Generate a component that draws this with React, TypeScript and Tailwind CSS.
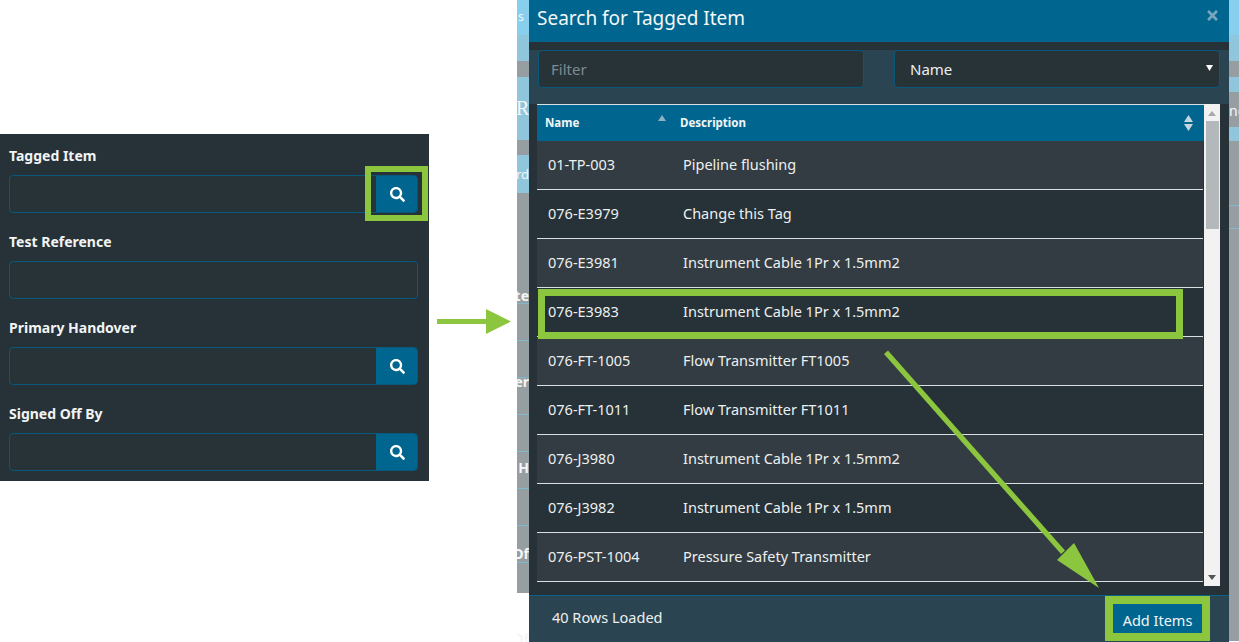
import { FaSearch, FaTimes } from "react-icons/fa";

const font = { fontFamily: '"Noto Sans", sans-serif' };

const rows = [
  ["01-TP-003", "Pipeline flushing"],
  ["076-E3979", "Change this Tag"],
  ["076-E3981", "Instrument Cable 1Pr x 1.5mm2"],
  ["076-E3983", "Instrument Cable 1Pr x 1.5mm2"],
  ["076-FT-1005", "Flow Transmitter FT1005"],
  ["076-FT-1011", "Flow Transmitter FT1011"],
  ["076-J3980", "Instrument Cable 1Pr x 1.5mm2"],
  ["076-J3982", "Instrument Cable 1Pr x 1.5mm"],
  ["076-PST-1004", "Pressure Safety Transmitter"],
];

function Field({ label, search }: { label: string; search: boolean }) {
  return (
    <div className="h-[86px] pt-[13px]">
      <div className="text-[14px] leading-[18px] font-bold text-[#f2f4f4] ml-[9px]">{label}</div>
      <div className="mt-[10px] ml-[9px] w-[409px] h-[38px] flex rounded-[4px] border border-[#07587a] bg-[#283338] overflow-hidden">
        <div className="flex-1" />
        {search && (
          <div className="w-[42px] -my-px -mr-px bg-[#00668f] flex items-center justify-center text-white">
            <FaSearch className="text-[15px]" />
          </div>
        )}
      </div>
    </div>
  );
}

function Strip({ bands, width }: { bands: [number, string][]; width: string }) {
  return (
    <div className={width + " h-full flex flex-col shrink-0"}>
      {bands.map(([h, c], i) => (
        <div key={i} style={{ height: h, background: c }} />
      ))}
    </div>
  );
}

const B = "#88cfee";
const D = "#8fc6dc";
const G = "#979ea2";
const L = "#7fb9d0";

const leftBands: [number, string][] = [
  [35, B], [26, D], [16, G], [63, D], [15, G], [38, D], [110, G], [1, L], [36, G], [1, L], [36, G], [1, L], [36, G], [1, L], [36, G], [1, L], [36, G], [1, L], [36, G], [1, L], [36, G], [1, L], [30, G],
];
const rightBands: [number, string][] = [
  [35, B], [26, D], [16, G], [15, D], [35, G], [14, D], [64, G], [1, L], [22, G], [1, L], [412, G],
];

export default function App() {
  return (
    <div className="relative flex w-[1239px] h-[642px] overflow-hidden bg-white" style={font}>
      {/* Left form panel */}
      <div className="w-[429px] h-[347px] mt-[134px] bg-[#263238] shrink-0">
        <Field label="Tagged Item" search />
        <Field label="Test Reference" search={false} />
        <Field label="Primary Handover" search />
        <Field label="Signed Off By" search />
      </div>

      <div className="w-[88px] shrink-0" />

      {/* Background strip left */}
      <Strip width="w-[12px]" bands={leftBands} />

      {/* Modal */}
      <div className="w-[700px] h-full shrink-0 flex flex-col bg-[#263238]">
        <div className="h-[42px] bg-[#00668f] flex items-center justify-between pl-[8px] pr-[9px]">
          <div className="text-[19px] leading-[36px] -mt-[6px] text-[#f4f7f8]">Search for Tagged Item</div>
          <FaTimes className="text-[15px] text-[#77a6bc] -mt-[12px]" />
        </div>
        <div className="h-[8px]" />
        <div className="h-[54px] bg-[#2b4451] flex pl-[9px] pr-[9px] gap-[30px]">
          <div className="w-[326px] h-[38px] rounded-[4px] border border-[#07587a] bg-[#283338] pl-[12px] flex items-center text-[15px] text-[#7d8b90]">
            Filter
          </div>
          <div className="w-[326px] h-[38px] rounded-[4px] border border-[#07587a] bg-[#283338] pl-[15px] pr-[6px] flex items-center justify-between text-[15px] text-[#eceff0]">
            <span>Name</span>
            <svg width="7" height="6" viewBox="0 0 7 6" className="-mt-[2px]">
              <path d="M0 0h7L3.5 6z" fill="#fff" />
            </svg>
          </div>
        </div>

        <div className="flex-1 flex pl-[8px] min-h-0">
          <div className="w-[667px] flex flex-col">
            <div className="h-[37px] bg-[#00668f] border-t border-[#d8e0e3] flex items-center text-[11.5px] font-bold text-[#f2f5f6] relative">
              <div className="w-[135px] pl-[8px] relative h-full flex items-center border-r-0">
                Name
                <svg width="8" height="6" viewBox="0 0 8 6" className="absolute right-[6px] top-[10px]">
                  <path d="M0 6h8L4 0z" fill="#8fb2c2" />
                </svg>
              </div>
              <div className="flex-1 pl-[8px]">Description</div>
              <svg width="9" height="16" viewBox="0 0 9 16" className="mr-[11px]">
                <path d="M0 7h9L4.5 0zM0 9h9l-4.5 7z" fill="#c3d5dd" />
              </svg>
            </div>
            {rows.map((r, i) => (
              <div
                key={r[0]}
                className={
                  "h-[49px] shrink-0 flex items-center border-b border-[#d9dfe0] text-[14.5px] text-[#edf0f0] w-[666px] " +
                  (i % 2 === 0 ? "bg-[#333c42]" : "bg-[#263238]")
                }
              >
                <div className="w-[135px] pl-[11px] -mt-[1px] whitespace-nowrap">{r[0]}</div>
                <div className="flex-1 pl-[11px] -mt-[1px] whitespace-nowrap">{r[1]}</div>
              </div>
            ))}
          </div>
          <div className="w-[16px] h-[482px] bg-[#f1f2f1] flex flex-col items-center">
            <svg width="8" height="5" viewBox="0 0 8 5" className="mt-[7px]">
              <path d="M0 5h8L4 0z" fill="#a5a9ab" />
            </svg>
            <div className="w-[13px] h-[108px] mt-[5px] bg-[#b3b9bb]" />
            <div className="flex-1" />
            <svg width="8" height="5" viewBox="0 0 8 5" className="mb-[6px]">
              <path d="M0 0h8L4 5z" fill="#50565a" />
            </svg>
          </div>
        </div>

        <div className="h-[47px] shrink-0 bg-[#2b4451] border-t border-[#0b6186] flex items-center justify-between pl-[23px] pr-[27px]">
          <div className="text-[14.5px] text-[#edf0f0] -mt-[3px]">40 Rows Loaded</div>
          <div className="w-[89px] h-[33px] mt-[3px] bg-[#00668f] flex items-center justify-center text-[14.5px] text-[#f2f5f6]">
            Add Items
          </div>
        </div>
      </div>

      {/* Background strip right */}
      <Strip width="w-[10px]" bands={rightBands} />

      {/* Fragments of the page behind the modal */}
      <div className="absolute left-[517px] top-0 w-[12px] h-full overflow-hidden text-[#f4f6f7] font-bold text-[14px]">
        <span className="absolute left-[1px] top-[8px] font-normal text-[12px]">s</span>
        <span className="absolute left-[-1px] top-[93px] text-[20px] font-normal" style={{ fontFamily: '"Liberation Serif", serif' }}>R</span>
        <span className="absolute right-0 top-[165px] font-normal whitespace-nowrap text-[13px]">ard</span>
        <span className="absolute right-0 top-[285px] whitespace-nowrap">lte</span>
        <span className="absolute right-0 top-[371px] whitespace-nowrap">er</span>
        <span className="absolute right-0 top-[457px] whitespace-nowrap">H</span>
        <span className="absolute right-0 top-[543px] whitespace-nowrap">Of</span>
        <span className="absolute right-0 top-[628px] whitespace-nowrap">Of</span>
      </div>
      <div className="absolute left-[1229px] top-[100px] w-[10px] overflow-hidden text-[14px] text-[#f4f6f7] whitespace-nowrap">ne</div>

      {/* Annotations */}
      <div className="absolute left-[365px] top-[166px] w-[63px] h-[55px] border-[6px] border-[#8cc63f]" />
      <div className="absolute left-[538px] top-[289px] w-[645px] h-[50px] border-[7px] border-[#8cc63f]" />
      <div className="absolute left-[1105px] top-[596px] w-[105px] h-[45px] border-[8px] border-[#8cc63f]" />
      <svg className="absolute left-0 top-0 pointer-events-none" width="1239" height="642" viewBox="0 0 1239 642">
        <path d="M437 319h49v-10l25 12.5-25 12.5v-10h-49z" fill="#8cc63f" />
        <path d="M884 354l4-3.500 177 200-4 3.500z" fill="#8cc63f" />
        <path d="M1057 560l17-17 25 45z" fill="#8cc63f" />
      </svg>
    </div>
  );
}
